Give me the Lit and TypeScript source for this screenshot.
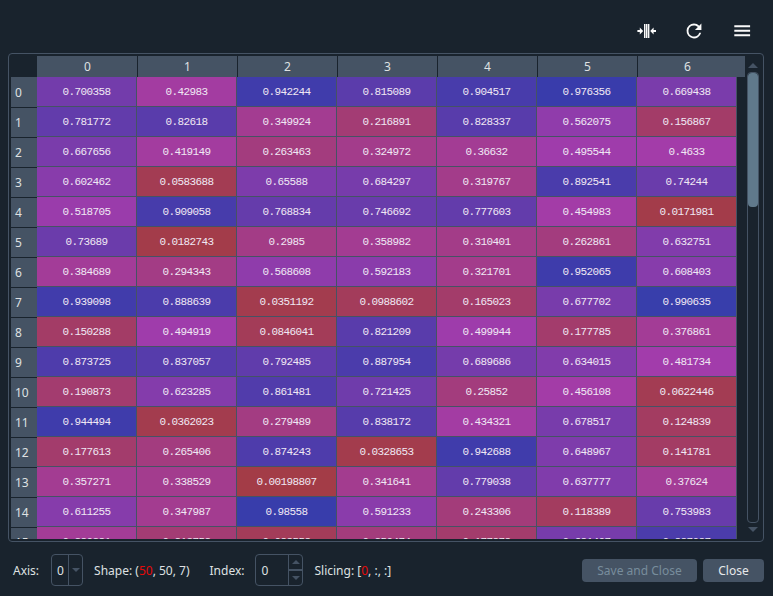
import { LitElement, html, css, svg } from "lit";
import { customElement, property } from "lit/decorators.js";

const ROWS: string[][] = [
  "0.700358 0.42983 0.942244 0.815089 0.904517 0.976356 0.669438",
  "0.781772 0.82618 0.349924 0.216891 0.828337 0.562075 0.156867",
  "0.667656 0.419149 0.263463 0.324972 0.36632 0.495544 0.4633",
  "0.602462 0.0583688 0.65588 0.684297 0.319767 0.892541 0.74244",
  "0.518705 0.909058 0.768834 0.746692 0.777603 0.454983 0.0171981",
  "0.73689 0.0182743 0.2985 0.358982 0.310401 0.262861 0.632751",
  "0.384689 0.294343 0.568608 0.592183 0.321701 0.952065 0.608403",
  "0.939098 0.888639 0.0351192 0.0988602 0.165023 0.677702 0.990635",
  "0.150288 0.494919 0.0846041 0.821209 0.499944 0.177785 0.376861",
  "0.873725 0.837057 0.792485 0.887954 0.689686 0.634015 0.481734",
  "0.190873 0.623285 0.861481 0.721425 0.25852 0.456108 0.0622446",
  "0.944494 0.0362023 0.279489 0.838172 0.434321 0.678517 0.124839",
  "0.177613 0.265406 0.874243 0.0328653 0.942688 0.648967 0.141781",
  "0.357271 0.338529 0.00198807 0.341641 0.779038 0.637777 0.37624",
  "0.611255 0.347987 0.98558 0.591233 0.243306 0.118389 0.753983",
  "0.380381 0.213752 0.088558 0.250474 0.177878 0.681407 0.887087",
].map((line) => line.split(" "));

/** Blends from red (low) to blue (high) around the magenta side of the wheel. */
function heat(value: number): string {
  const hue = (0.99 - 0.33 * value) * 360;
  return `hsla(${hue.toFixed(1)}, 100%, 65%, 0.6)`;
}

@customElement("tool-bar")
class ToolBar extends LitElement {
  static styles = css`
    :host { display: flex; justify-content: flex-end; align-items: center; gap: 24px; height: 53px; padding: 9px 19px 0 0; box-sizing: border-box; }
    svg { display: block; width: 24px; height: 24px; fill: #fafafa; }
  `;
  render() {
    return html`
      <svg viewBox="0 0 24 24">${svg`<path d="M10 5h1.5v14H10zM12 5h1.4v14H12zM13.9 5h1.5v14h-1.5zM3.4 11.1h2.4V8.6L9.2 12l-3.4 3.4v-2.5H3.4zM22 11.1h-2.4V8.6L16.2 12l3.4 3.4v-2.5H22z"/>`}</svg>
      <svg viewBox="0 0 24 24">${svg`<path d="M17.65 6.35A7.96 7.96 0 0 0 12 4a8 8 0 1 0 7.73 10h-2.08A6 6 0 1 1 12 6c1.66 0 3.14.69 4.22 1.78L13 11h7V4z" transform="translate(.9 .9) scale(.925)"/>`}</svg>
      <svg viewBox="0 0 24 24">${svg`<path d="M4.3 6.7h15.8v2H4.3zM4.3 11.2h15.8v2H4.3zM4.3 15.7h15.8v2H4.3z" transform="translate(0 -.4)"/>`}</svg>
    `;
  }
}

@customElement("scroll-rail")
class ScrollRail extends LitElement {
  static styles = css`
    :host { display: flex; flex-direction: column; align-items: center; width: 12px; }
    .arrow { border: 5px solid transparent; border-top-width: 0; border-bottom: 5px solid #455364; margin: 7px 0 4px; }
    .arrow.down { border-top: 5px solid #455364; border-bottom-width: 0; margin: 4px 0 7px; }
    .track { flex: 1; width: 12px; box-sizing: border-box; border: 1px solid #455364; border-radius: 4px; }
    .thumb { height: 134px; border-radius: 4px; background: #60798b; }
  `;
  render() {
    return html`<div class="arrow"></div><div class="track"><div class="thumb"></div></div><div class="arrow down"></div>`;
  }
}

@customElement("array-grid")
class ArrayGrid extends LitElement {
  @property({ attribute: false }) rows: string[][] = [];
  static styles = css`
    :host { display: flex; box-sizing: border-box; width: 756px; height: 489px; margin-left: 8px; padding: 2px 4px 2px 2px; border: 1px solid #455364; border-radius: 4px; }
    .view { width: 734px; height: 483px; overflow: hidden; margin-right: 2px; }
    .head, .row { display: flex; }
    .head { height: 21px; padding-left: 26px; font-size: 12px; line-height: 22px; }
    .head div { width: 100px; box-sizing: border-box; border-left: 1px solid #19232d; background: #455364; text-align: center; }
    .head div:first-child { border-left-color: #455364; }
    .head div:last-child { width: 108px; padding-right: 8px; }
    .row { height: 30px; }
    .index { width: 26px; height: 30px; box-sizing: border-box; padding-left: 4px; border-top: 1px solid #19232d; background: #455364; font-size: 12px; line-height: 29px; }
    .head + .row .index { border-top-color: #455364; }
    .cell { width: 100px; height: 30px; box-sizing: border-box; border-right: 1px solid #455364; border-bottom: 1px solid #455364; background-clip: padding-box; text-align: center; font: 11px/30px "Liberation Mono", monospace; letter-spacing: -0.6px; color: #f0e8f4; }
  `;
  render() {
    return html`
      <div class="view">
        <div class="head">${this.rows[0]?.map((_, i) => html`<div>${i}</div>`)}</div>
        ${this.rows.map((row, i) => html`
          <div class="row">
            <div class="index">${i}</div>
            ${row.map((v) => html`<div class="cell" style="background-color:${heat(Number(v))}">${v}</div>`)}
          </div>`)}
      </div>
      <scroll-rail></scroll-rail>
    `;
  }
}

@customElement("slice-bar")
class SliceBar extends LitElement {
  static styles = css`
    :host { display: flex; align-items: center; height: 54px; padding: 2px 9px 0 13px; box-sizing: border-box; }
    .field { display: flex; box-sizing: border-box; height: 32px; border: 1px solid #455364; border-radius: 4px; line-height: 31px; }
    .axis { width: 32px; margin: 0 11px 0 12px; }
    .index { width: 48px; margin: 0 11px 0 11px; }
    .value { flex: 1; padding-left: 5px; }
    .side { display: flex; flex-direction: column; align-items: center; justify-content: center; width: 13px; border-left: 1px solid #455364; }
    .step { flex: 1; display: flex; align-items: center; justify-content: center; width: 100%; }
    .step + .step { border-top: 2px solid #455364; }
    .down { border: 4px solid transparent; border-top: 4px solid #455364; border-bottom: 0; }
    .up { border: 4px solid transparent; border-bottom: 4px solid #455364; border-top: 0; }
    .shape { margin-right: 20px; }
    .hot { color: #e60a0a; }
    .space { flex: 1; }
    .button { height: 23px; border-radius: 4px; background: #455364; color: #e6e8ea; line-height: 23px; text-align: center; width: 61px; }
    .off { width: 115px; margin-right: 6px; color: #788d9c; }
  `;
  render() {
    return html`
      <span>Axis:</span>
      <div class="field axis"><span class="value">0</span><div class="side"><i class="down"></i></div></div>
      <span class="shape">Shape: (<span class="hot">50</span>, 50, 7)</span>
      <span>Index:</span>
      <div class="field index"><span class="value">0</span>
        <div class="side"><div class="step"><i class="up"></i></div><div class="step"><i class="down"></i></div></div>
      </div>
      <span>Slicing: [<span class="hot">0</span>, :, :]</span>
      <div class="space"></div>
      <div class="button off">Save and Close</div>
      <div class="button">Close</div>
    `;
  }
}

@customElement("app-root")
class AppRoot extends LitElement {
  static styles = css`
    :host { display: block; width: 773px; height: 596px; overflow: hidden; background: #19232d; color: #dfe1e2; font-family: "Noto Sans", sans-serif; font-size: 12px; white-space: nowrap; }
  `;
  render() {
    return html`<tool-bar></tool-bar><array-grid .rows=${ROWS}></array-grid><slice-bar></slice-bar>`;
  }
}
